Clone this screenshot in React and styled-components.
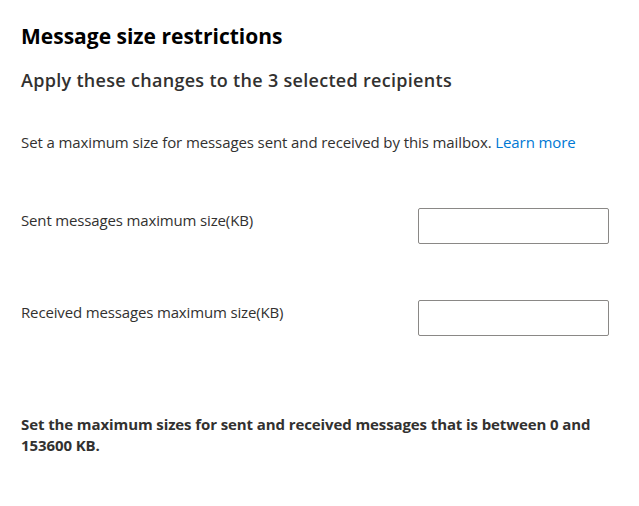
import styled, { createGlobalStyle } from "styled-components";

const GlobalStyle = createGlobalStyle`
  html, body {
    margin: 0;
    padding: 0;
    background: #ffffff;
  }
  body {
    font-family: "Segoe UI", "Open Sans", "Noto Sans", sans-serif;
    color: #323130;
  }
`;

const Panel = styled.div`
  width: 639px;
  height: 506px;
  box-sizing: border-box;
  padding: 22px 30px 0 21px;
`;

const Title = styled.h1`
  margin: 0;
  font-size: 21px;
  line-height: 28px;
  font-weight: 700;
  color: #000000;
`;

const Subtitle = styled.h2`
  margin: 18px 0 0;
  font-size: 18px;
  line-height: 24px;
  font-weight: 600;
  color: #323130;
  letter-spacing: 0.3px;
`;

const Intro = styled.p`
  margin: 40px 0 0;
  font-size: 15px;
  line-height: 20px;
  letter-spacing: -0.1px;
`;

const Link = styled.a`
  color: #0078d4;
  text-decoration: none;
`;

const Field = styled.div`
  display: flex;
  justify-content: space-between;
  align-items: flex-start;
  margin-top: 56px;
`;

const Label = styled.label`
  font-size: 15px;
  line-height: 20px;
  padding-top: 2px;
  letter-spacing: -0.15px;
`;

const Input = styled.input`
  width: 191px;
  height: 36px;
  box-sizing: border-box;
  border: 1px solid #8a8886;
  border-radius: 2px;
  padding: 0 8px;
  font: inherit;
  font-size: 14px;
  outline: none;
`;

const Note = styled.p`
  margin: 78px 0 0;
  font-size: 15px;
  line-height: 21px;
  font-weight: 700;
  letter-spacing: -0.1px;
`;

export default function App() {
  return (
    <>
      <GlobalStyle />
      <Panel>
        <Title>Message size restrictions</Title>
        <Subtitle>Apply these changes to the 3 selected recipients</Subtitle>
        <Intro>
          Set a maximum size for messages sent and received by this mailbox.{" "}
          <Link href="#">Learn more</Link>
        </Intro>
        <Field>
          <Label>Sent messages maximum size(KB)</Label>
          <Input type="text" />
        </Field>
        <Field>
          <Label>Received messages maximum size(KB)</Label>
          <Input type="text" />
        </Field>
        <Note>
          Set the maximum sizes for sent and received messages that is between 0 and
          153600 KB.
        </Note>
      </Panel>
    </>
  );
}
